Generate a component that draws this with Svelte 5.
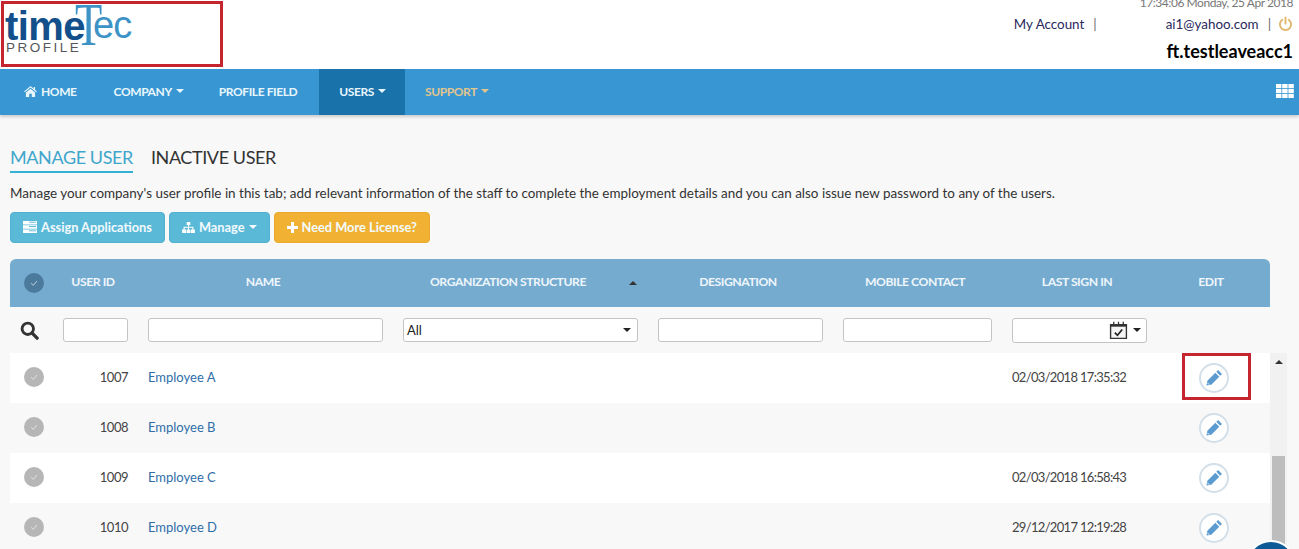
<script>
  const navItems = [
    { label: "HOME", icon: "home" },
    { label: "COMPANY", caret: true },
    { label: "PROFILE FIELD" },
    { label: "USERS", caret: true, active: true },
    { label: "SUPPORT", caret: true, muted: true }
  ];

  const columns = [
    { label: "USER ID" },
    { label: "NAME" },
    { label: "ORGANIZATION STRUCTURE", sort: true },
    { label: "DESIGNATION" },
    { label: "MOBILE CONTACT" },
    { label: "LAST SIGN IN" },
    { label: "EDIT" }
  ];

  const users = [
    { id: 1007, name: "Employee A", last: "02/03/2018 17:35:32", marked: true },
    { id: 1008, name: "Employee B", last: "" },
    { id: 1009, name: "Employee C", last: "02/03/2018 16:58:43" },
    { id: 1010, name: "Employee D", last: "29/12/2017 12:19:28" }
  ];
</script>

<div class="page">
  <header class="top">
    <a class="logo" href="/">
      <span class="logo-time">time</span><span class="logo-t">T</span><span class="logo-ec">ec</span>
      <span class="logo-profile">PROFILE</span>
    </a>
    <div class="account">
      <div class="clock">17:34:06 Monday, 25 Apr 2018</div>
      <div class="links">
        <a href="/">My Account</a>
        <span class="sep first">|</span>
        <a href="/">ai1@yahoo.com</a>
        <span class="sep">|</span>
        <svg class="power" viewBox="0 0 16 16" width="15" height="16">
          <path d="M4.6 3.4a6 6 0 1 0 6.8 0" fill="none" stroke="#e2b66c" stroke-width="2" stroke-linecap="round" />
          <path d="M8 1v6.4" fill="none" stroke="#e2b66c" stroke-width="2" stroke-linecap="round" />
        </svg>
      </div>
      <div class="username">ft.testleaveacc1</div>
    </div>
  </header>

  <nav>
    <ul>
      {#each navItems as item}
        <li class:active={item.active} class:muted={item.muted}>
          {#if item.icon}
            <svg viewBox="0 0 14 12" width="13" height="11">
              <path d="M7 0 L10.4 2.9 V1 H12 V4.2 L14 6 L13.2 6.9 L7 1.7 L.8 6.9 L0 6 Z M7 2.9 L12 7 V12 H8.4 V8.4 H5.6 V12 H2 V7 Z" fill="currentColor" />
            </svg>
          {/if}
          {item.label}
          {#if item.caret}<span class="caret"></span>{/if}
        </li>
      {/each}
    </ul>
    <svg class="apps" viewBox="0 0 18 14" width="18" height="14">
      {#each [0, 1, 2] as r}
        {#each [0, 1, 2] as c}
          <rect x={c * 6.2} y={r * 5} width="5.4" height="4.2" fill="#fff" />
        {/each}
      {/each}
    </svg>
  </nav>

  <main>
    <div class="tabs">
      <span class="tab current">MANAGE USER</span>
      <span class="tab">INACTIVE USER</span>
    </div>
    <p class="intro">Manage your company's user profile in this tab; add relevant information of the staff to complete the employment details and you can also issue new password to any of the users.</p>

    <div class="actions">
      <button class="btn info">
        <svg viewBox="0 0 14 12" width="14" height="12">
          <path d="M0 0H14V3.4H0ZM0 4.3H14V7.7H0ZM0 8.6H14V12H0Z" fill="#fff" />
          <path d="M6 1.2H13M6 5.5H13M6 9.8H13" stroke="#5bb9d8" stroke-width=".9" />
        </svg>
        Assign Applications
      </button>
      <button class="btn info">
        <svg viewBox="0 0 14 12" width="13" height="11">
          <path d="M5 0H9V3.4H7.5V5.2H12.4V8.2H14V12H9.6V8.2H11.2V6.4H7.6V8.2H9V12H5V8.2H6.4V6.4H2.8V8.2H4.4V12H0V8.2H1.6V5.2H6.5V3.4H5Z" fill="#fff" />
        </svg>
        Manage <span class="caret"></span>
      </button>
      <button class="btn warn">
        <svg viewBox="0 0 11 11" width="11" height="11">
          <path d="M4 0H7V4H11V7H7V11H4V7H0V4H4Z" fill="#fff" />
        </svg>
        Need More License?
      </button>
    </div>

    <section class="grid">
      <div class="row head">
        <div class="check-cell"><span class="check dark">
          <svg viewBox="0 0 10 10" width="10" height="10"><path d="M2 5.2 4.2 7.4 8 3" fill="none" stroke="#b9cfdf" stroke-width="1" /></svg>
        </span></div>
        {#each columns as col}
          <div class="th" class:sorted={col.sort}>
            {col.label}
            {#if col.sort}<span class="sort"></span>{/if}
          </div>
        {/each}
      </div>

      <div class="row filters">
        <div class="check-cell search">
          <svg viewBox="0 0 20 20" width="19" height="19">
            <circle cx="8.2" cy="8.2" r="6" fill="none" stroke="#333" stroke-width="3" />
            <path d="M12.8 12.8 18 18" stroke="#333" stroke-width="3.6" stroke-linecap="round" />
          </svg>
        </div>
        <div class="cell"><input /></div>
        <div class="cell"><input /></div>
        <div class="cell">
          <div class="select">All <span class="caret dark"></span></div>
        </div>
        <div class="cell"><input /></div>
        <div class="cell"><input /></div>
        <div class="cell">
          <div class="select date">
            <svg viewBox="0 0 18 18" width="19" height="19">
              <path d="M1.5 3.5H16.5V16.5H1.5Z" fill="#f4f4f4" stroke="#333" stroke-width="1.3" />
              <path d="M1.5 3H16.5V5.4H1.5Z" fill="#333" />
              <path d="M4.5 .8V3.6M9 .8V3.6M13.5 .8V3.6" stroke="#333" stroke-width="1.2" />
              <path d="M5.5 11 8 13.5 12.5 8" fill="none" stroke="#222" stroke-width="1.6" />
            </svg>
            <span class="caret dark"></span>
          </div>
        </div>
        <div class="cell"></div>
      </div>

      <div class="body">
        <div class="rows">
          {#each users as user, i}
            <div class="row item" class:odd={i % 2 === 0}>
              <div class="check-cell"><span class="check">
                <svg viewBox="0 0 10 10" width="10" height="10"><path d="M2 5.2 4.2 7.4 8 3" fill="none" stroke="#e2e2e2" stroke-width="1" /></svg>
              </span></div>
              <div class="cell id">{user.id}</div>
              <div class="cell"><a href="/">{user.name}</a></div>
              <div class="cell"></div>
              <div class="cell"></div>
              <div class="cell"></div>
              <div class="cell date-text">{user.last}</div>
              <div class="cell edit">
                <span class="pencil">
                  <svg viewBox="0 0 14 14" width="16" height="16">
                    <path d="M10.6 0 14 3.4 12.4 5 9 1.6ZM8.2 2.4 11.6 5.8 4.6 12.8 .4 13.6 1.2 9.4Z" fill="#5b9bd0" />
                    <path d="M1.2 11.2 2.8 12.8" stroke="#fff" stroke-width=".8" />
                  </svg>
                </span>
                {#if user.marked}<span class="mark"></span>{/if}
              </div>
            </div>
          {/each}
        </div>
        <div class="scrollbar">
          <span class="arrow"></span>
          <span class="thumb"></span>
        </div>
      </div>
    </section>
  </main>

  <div class="chat"></div>
</div>

<style>
  :global(body) {
    margin: 0;
    overflow: hidden;
  }

  .page {
    position: relative;
    height: 549px;
    overflow: hidden;
    background: #f8f8f8;
    font-family: "Lato", "Noto Sans", sans-serif;
    font-size: 13px;
    color: #333;
  }

  a {
    text-decoration: none;
  }

  .top {
    height: 69px;
    background: #fff;
    display: flex;
    justify-content: space-between;
  }

  .logo {
    position: relative;
    display: block;
    box-sizing: border-box;
    width: 222px;
    height: 66px;
    margin: 1px 0 0 1px;
    border: 3px solid #c5252f;
    white-space: nowrap;
  }

  .logo-time,
  .logo-t,
  .logo-ec,
  .logo-profile {
    position: absolute;
  }

  .logo-time {
    left: 1px;
    top: -2px;
    font: bold 40px/48px "Liberation Sans", sans-serif;
    letter-spacing: -0.6px;
    color: #134f8a;
  }

  .logo-t {
    left: 71px;
    top: -11px;
    font: 62px/62px "Liberation Serif", serif;
    color: #3d93c6;
    transform: scaleX(0.72);
    transform-origin: left;
  }

  .logo-ec {
    left: 89px;
    top: -2px;
    font: 38px/46px "Liberation Sans", sans-serif;
    letter-spacing: -1px;
    color: #3d93c6;
  }

  .logo-profile {
    left: 2px;
    top: 36px;
    font: 13.5px/16px "Liberation Sans", sans-serif;
    letter-spacing: 2.5px;
    color: #54565a;
  }

  .account {
    width: 300px;
    padding-right: 6px;
    box-sizing: border-box;
    text-align: right;
    font-size: 13.4px;
  }

  .clock {
    height: 9px;
    line-height: 6px;
    font-size: 12px;
    letter-spacing: -0.45px;
    color: #777;
  }

  .links {
    margin-top: 5px;
    height: 20px;
    display: flex;
    align-items: center;
    justify-content: flex-end;
    color: #666;
  }

  .links a {
    color: #2a2a5e;
  }

  .sep {
    margin: 0 7px 0 9px;
  }

  .sep.first {
    margin-right: 69px;
  }

  .username {
    margin-top: 7px;
    font-size: 18px;
    font-weight: 700;
    line-height: 20px;
    color: #000;
  }

  nav {
    position: relative;
    height: 46px;
    background: #3896d3;
    box-shadow: 0 2px 3px rgba(0, 0, 0, 0.18);
    display: flex;
    justify-content: space-between;
    align-items: center;
    color: #e8f6fb;
    font-weight: 700;
    font-size: 12px;
    letter-spacing: -0.4px;
  }

  nav ul {
    display: flex;
    height: 100%;
    margin: 0;
    padding: 0;
    list-style: none;
  }

  nav li {
    display: flex;
    align-items: center;
    gap: 4px;
    padding: 0 20px 2px;
  }

  nav li:nth-child(1) {
    padding-left: 24px;
    padding-right: 17px;
  }

  nav li:nth-child(2) {
    padding-right: 15px;
  }

  nav li:nth-child(3) {
    padding-right: 22px;
  }

  nav li:nth-child(4) {
    padding-right: 19px;
  }

  nav li.active {
    background: #1a72ab;
  }

  nav li.muted {
    color: #e0c58e;
  }

  .apps {
    margin-right: 5px;
    margin-bottom: 2px;
  }

  .caret {
    display: inline-block;
    width: 0;
    height: 0;
    border-left: 4px solid transparent;
    border-right: 4px solid transparent;
    border-top: 4px solid currentColor;
  }

  main {
    padding: 30px 22px 0 10px;
  }

  .tabs {
    display: flex;
    gap: 18px;
    font-size: 18px;
    letter-spacing: -0.4px;
    line-height: 24px;
    height: 30px;
    color: #333;
  }

  .tab {
    height: 28px;
    box-sizing: border-box;
  }

  .tab.current {
    color: #3fa6cb;
    border-bottom: 2px solid #35b1d6;
  }

  .intro {
    margin: 9px 0 0;
    line-height: 18px;
    font-size: 13.44px;
    color: #333;
  }

  .actions {
    display: flex;
    gap: 4px;
    margin-top: 10px;
  }

  .btn {
    height: 31px;
    padding: 0 12px 1px;
    display: flex;
    align-items: center;
    gap: 4px;
    border: 1px solid #4fb0d0;
    border-radius: 4px;
    color: #f2fafd;
    font: 700 12.8px "Lato", sans-serif;
  }

  .btn.info {
    background: #5bb9d8;
  }

  .btn.warn {
    background: #f1b233;
    border-color: #e8a92c;
  }

  .grid {
    margin-top: 16px;
    width: 1260px;
  }

  .row {
    display: grid;
    grid-template-columns: 43px 85px 255px 255px 185px 169px 155px 113px;
    align-items: center;
  }

  .head {
    height: 48px;
    background: #76abd0;
    border-radius: 6px 6px 0 0;
    color: #eef6fb;
    font-weight: 700;
    font-size: 12.2px;
    letter-spacing: -0.45px;
  }

  .th {
    position: relative;
    text-align: center;
    padding-right: 5px;
    padding-bottom: 3px;
  }

  .th.sorted {
    padding-right: 25px;
  }

  .sort {
    position: absolute;
    right: 11px;
    top: 7px;
    border-left: 4px solid transparent;
    border-right: 4px solid transparent;
    border-bottom: 4px solid #333;
  }

  .check-cell {
    display: flex;
    justify-content: center;
    padding-left: 4px;
  }

  .check-cell.search {
    padding-left: 0;
    padding-right: 5px;
    padding-top: 1px;
  }

  .check {
    width: 20px;
    height: 20px;
    border-radius: 50%;
    background: #b6b6b6;
    display: flex;
    align-items: center;
    justify-content: center;
  }

  .check.dark {
    background: #4c7a9c;
  }

  .filters {
    height: 46px;
  }

  .cell {
    padding: 0 10px;
    min-width: 0;
  }

  input,
  .select {
    display: flex;
    align-items: center;
    box-sizing: border-box;
    width: 100%;
    height: 24px;
    margin: 0;
    padding: 0 6px 0 3px;
    background: #fff;
    border: 1px solid #c4c4c4;
    border-radius: 3px;
  }

  .select {
    justify-content: space-between;
    font-size: 13px;
    color: #222;
  }

  .select.date {
    justify-content: flex-end;
    gap: 5px;
    padding-right: 5px;
    height: 25px;
  }

  .caret.dark {
    color: #222;
  }

  .body {
    position: relative;
    width: 1277px;
    display: flex;
    background: #f1f1f1;
  }

  .rows {
    width: 1260px;
    flex: none;
  }

  .item {
    height: 50px;
    background: #f8f8f8;
    color: #444;
    padding-bottom: 2px;
    box-sizing: border-box;
  }

  .item.odd {
    background: #fff;
  }

  .item a {
    color: #2f6ea8;
  }

  .id {
    text-align: right;
    letter-spacing: -0.5px;
  }

  .date-text {
    letter-spacing: -0.68px;
    white-space: nowrap;
  }

  .edit {
    position: relative;
    display: flex;
    justify-content: center;
    top: 1px;
  }

  .pencil {
    width: 26px;
    height: 26px;
    border: 2px solid #d3dfe9;
    border-radius: 50%;
    background: #fff;
    display: flex;
    align-items: center;
    justify-content: center;
  }

  .mark {
    position: absolute;
    left: 25px;
    top: -10px;
    width: 63px;
    height: 41px;
    border: 3px solid #c5252f;
  }

  .scrollbar {
    position: relative;
    flex: 1;
  }

  .arrow {
    position: absolute;
    left: 5px;
    top: 7px;
    border-left: 4px solid transparent;
    border-right: 4px solid transparent;
    border-bottom: 4px solid #333;
  }

  .thumb {
    position: absolute;
    left: 2px;
    right: 2px;
    top: 103px;
    height: 100px;
    background: #bdbdbd;
  }

  .chat {
    position: absolute;
    left: 1246px;
    top: 540px;
    width: 50px;
    height: 50px;
    border-radius: 50%;
    background: #0d5a96;
    border: 2px solid #fff;
    box-sizing: border-box;
  }
</style>
